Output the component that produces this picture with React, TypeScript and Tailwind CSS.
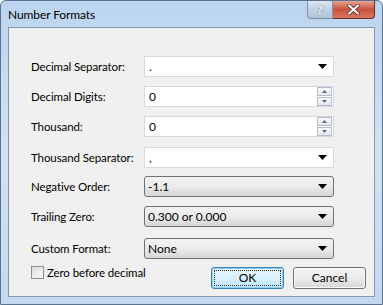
import React from "react";

const font = { fontFamily: 'Lato, "Noto Sans", Arial, sans-serif' };

function Arrow() {
  return (
    <svg width="9" height="5" viewBox="0 0 9 5" aria-hidden="true">
      <path d="M0 0h9L4.5 5z" fill="#000" />
    </svg>
  );
}

function EditCombo({ value }: { value: string }) {
  return (
    <div className="flex h-[21px] w-[190px] items-center border border-[#d5dae1] bg-white pl-[4px] pr-[6px]">
      <span className="flex-1 text-[12px] text-black">{value}</span>
      <Arrow />
    </div>
  );
}

function Combo({ value }: { value: string }) {
  return (
    <div className="flex h-[21px] w-[190px] items-center rounded-[3px] border border-[#707070] bg-gradient-to-b from-[#f2f2f2] via-[#ebebeb] to-[#d6d6d6] pl-[3px] pr-[6px]">
      <span className="flex-1 text-[12px] text-black">{value}</span>
      <Arrow />
    </div>
  );
}

function SpinBtn({ up }: { up?: boolean }) {
  return (
    <div className="flex h-[9px] w-[15px] items-center justify-center border border-[#b4bccb] bg-gradient-to-b from-[#f8f9fb] to-[#e2e6ee]">
      <svg width="5" height="3" viewBox="0 0 5 3" aria-hidden="true">
        <path d={up ? "M0 3h5L2.5 0z" : "M0 0h5L2.5 3z"} fill="#5b6b86" />
      </svg>
    </div>
  );
}

function Spin({ value }: { value: string }) {
  return (
    <div className="flex h-[21px] w-[190px] items-center border border-[#d5dae1] bg-white pl-[4px] pr-[1px]">
      <span className="flex-1 text-[12px] text-black">{value}</span>
      <div className="flex flex-col gap-[1px]">
        <SpinBtn up />
        <SpinBtn />
      </div>
    </div>
  );
}

const rows: { label: string; field: React.ReactNode; mt: string }[] = [
  { label: "Decimal Separator:", field: <EditCombo value="." />, mt: "mt-0" },
  { label: "Decimal Digits:", field: <Spin value="0" />, mt: "mt-[9px]" },
  { label: "Thousand:", field: <Spin value="0" />, mt: "mt-[9px]" },
  { label: "Thousand Separator:", field: <EditCombo value="," />, mt: "mt-[10px]" },
  { label: "Negative Order:", field: <Combo value="-1.1" />, mt: "mt-[8px]" },
  { label: "Trailing Zero:", field: <Combo value="0.300 or 0.000" />, mt: "mt-[9px]" },
  { label: "Custom Format:", field: <Combo value="None" />, mt: "mt-[11px]" },
];

export default function App() {
  return (
    <div
      className="flex h-[305px] w-[383px] flex-col overflow-hidden rounded-t-[6px] border border-[#5c738f] bg-gradient-to-b from-[#bcd4ef] via-[#d2e2f4] to-[#c4d9f1]"
      style={font}
    >
      <div className="flex h-[26px] items-start">
        <span className="ml-[7px] mt-[5px] flex-1 text-[12px] tracking-[-0.1px] text-black">Number Formats</span>
        <div className="flex h-[18px] w-[26px] items-center justify-center rounded-bl-[4px] border border-t-0 border-[#7e92ab] bg-gradient-to-b from-[#dbe6f3] via-[#c2d1e3] to-[#b1c4da] text-[12px] font-bold text-white [text-shadow:0_0_2px_#4a5a70]">
          ?
        </div>
        <div className="mr-[7px] flex h-[18px] w-[42px] items-center justify-center rounded-br-[4px] border border-t-0 border-l-0 border-[#6d2a24] bg-gradient-to-b from-[#e7a493] via-[#c9523c] to-[#d8775f]">
          <svg width="13" height="11" viewBox="0 0 13 11" aria-hidden="true">
            <path d="M2 1.5l9 8M11 1.5l-9 8" stroke="#4a1a14" strokeWidth="3.4" strokeLinecap="round" />
            <path d="M2 1.5l9 8M11 1.5l-9 8" stroke="#fff" strokeWidth="2.2" strokeLinecap="round" />
          </svg>
        </div>
      </div>
      <div className="mx-[7px] mb-[7px] flex flex-1 flex-col border border-[#8797ad] bg-[#f0f0f0] pl-[22px] pr-[8px] pt-[28px]">
        {rows.map((r) => (
          <div key={r.label} className={`flex items-center ${r.mt}`}>
            <span className="w-[113px] whitespace-nowrap text-[11.5px] tracking-[-0.1px] text-black">{r.label}</span>
            {r.field}
          </div>
        ))}
        <div className="mt-[5px] flex items-start">
          <div className="flex items-center gap-[3px]">
            <span className="h-[13px] w-[13px] border border-[#8e8f8f] bg-gradient-to-br from-[#dcdcdc] to-[#fbfbfb]" />
            <span className="whitespace-nowrap text-[11.5px] tracking-[-0.1px] text-black">Zero before decimal</span>
          </div>
          <div className="ml-auto mt-[3px] flex gap-[9px]">
            <div className="flex h-[22px] w-[73px] items-center justify-center rounded-[3px] border border-[#3c7fb1] bg-gradient-to-b from-[#eaf6fd] via-[#d9f0fc] to-[#bee6fd] p-[2px] shadow-[inset_0_0_0_1px_#8fd3f5]">
              <div className="flex h-full w-full items-center justify-center border border-dotted border-[#333]">
                <span className="text-[12px] text-black">OK</span>
              </div>
            </div>
            <div className="flex h-[22px] w-[73px] items-center justify-center rounded-[3px] border border-[#707070] bg-gradient-to-b from-[#f2f2f2] via-[#ebebeb] to-[#d6d6d6] shadow-[inset_0_0_0_1px_#fbfbfb]">
              <span className="text-[12px] text-black">Cancel</span>
            </div>
          </div>
        </div>
      </div>
    </div>
  );
}
